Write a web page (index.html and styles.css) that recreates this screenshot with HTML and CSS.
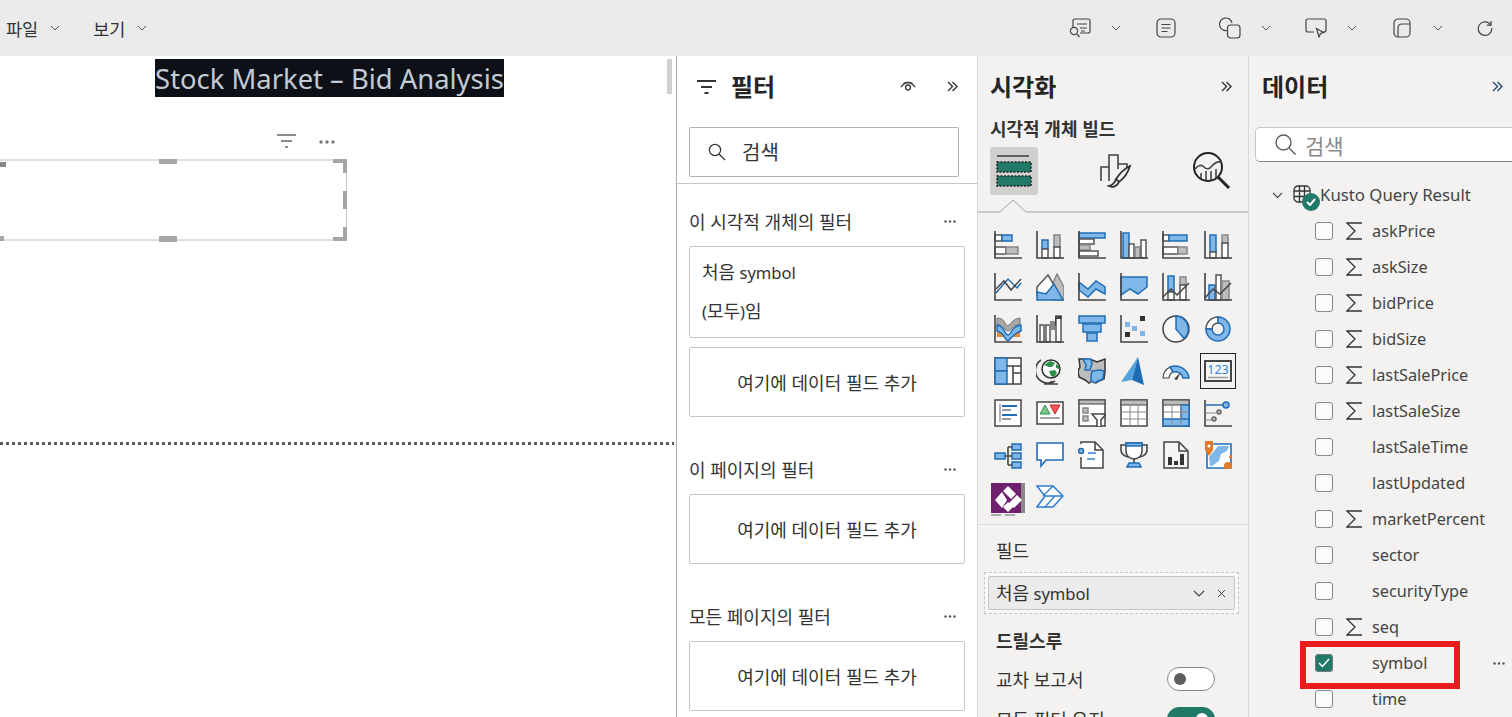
FILE: index.html
```html
<!DOCTYPE html>
<html lang="ko">
<head>
    <meta charset="UTF-8">
    <title>Power BI</title>
    <link rel="stylesheet" href="styles.css">
</head>
<body>
<div class="app">
    <header class="topbar">
        <nav class="menu">
            <span class="menu-item">파일 <svg class="chev" viewBox="0 0 10 6"><path d="M1 1l4 4 4-4"/></svg></span>
            <span class="menu-item">보기 <svg class="chev" viewBox="0 0 10 6"><path d="M1 1l4 4 4-4"/></svg></span>
        </nav>
        <div class="tools">
            <svg class="tool t1" viewBox="0 0 22 20"><path d="M4 9V3q0-2 2-2h13q2 0 2 2v10q0 2-2 2h-8"/><path d="M8 6h10M11 10h7M12 13h4"/><circle cx="5" cy="13" r="3.6"/><path d="M8 16l2.500 3"/></svg>
            <svg class="chev c1" viewBox="0 0 10 6"><path d="M1 1l4 4 4-4"/></svg>
            <svg class="tool t2" viewBox="0 0 20 20"><rect x="1" y="1" width="18" height="18" rx="4"/><path d="M5.500 6.500h9M5.500 10h9M5.500 13.500h6"/></svg>
            <svg class="tool t3" viewBox="0 0 22 22"><path d="M8 13.500a6.300 6.300 0 1 1 5-7.500"/><rect x="8.500" y="8" width="12.500" height="13" rx="3"/></svg>
            <svg class="chev c2" viewBox="0 0 10 6"><path d="M1 1l4 4 4-4"/></svg>
            <svg class="tool t4" viewBox="0 0 22 20"><path d="M9 14H3q-2 0-2-2V3q0-2 2-2h16q2 0 2 2v9q0 2-2 2h-2"/><path d="M11.500 10.500l7 4-3 1-1.500 3.500z"/></svg>
            <svg class="chev c3" viewBox="0 0 10 6"><path d="M1 1l4 4 4-4"/></svg>
            <svg class="tool t5" viewBox="0 0 18 20"><rect x="1" y="1" width="16" height="18" rx="4"/><path d="M5 19v-9q0-4 4-4h8"/></svg>
            <svg class="chev c4" viewBox="0 0 10 6"><path d="M1 1l4 4 4-4"/></svg>
            <svg class="tool t6" viewBox="0 0 16 16"><path d="M13.800 5A6.800 6.800 0 1 0 14.800 8"/><path d="M14 1v4.200H9.800"/></svg>
        </div>
    </header>

    <main class="main">
        <section class="canvas">
            <h1 class="report-title">Stock Market – Bid Analysis</h1>
            <div class="canvas-scroll"></div>
            <svg class="vis-filter" viewBox="0 0 19 14"><path d="M0 1h19M4 7h11M8 13h3"/></svg>
            <svg class="dots vis-more" viewBox="0 0 16 4"><circle cx="2" cy="2" r="1.700"/><circle cx="8" cy="2" r="1.700"/><circle cx="14" cy="2" r="1.700"/></svg>
            <div class="visual">
                <i class="grip g-tm"></i><i class="grip g-bm"></i><i class="grip g-rm"></i>
                <i class="grip g-lt"></i><i class="grip g-lb"></i>
                <i class="corner c-tr"></i><i class="corner c-br"></i>
            </div>
            <div class="page-break"></div>
        </section>

        <aside class="filters">
            <div class="pane-head">
                <svg class="head-filter" viewBox="0 0 19 14"><path d="M0 1h19M4 7h11M7.500 13h4"/></svg>
                <h2 class="pane-title">필터</h2>
                <svg class="eye" viewBox="0 0 16 11"><path d="M1 6q7-9 14 0"/><path d="M3.500 2.500q4.500-2 9 0" class="thin"/><circle cx="8" cy="6.500" r="2.400"/></svg>
                <svg class="dbl" viewBox="0 0 11 11"><path d="M1 1l4.500 4.500L1 10M5.500 1L10 5.500 5.500 10"/></svg>
            </div>
            <div class="filter-search">
                <svg class="glass" viewBox="0 0 18 18"><circle cx="7" cy="7" r="5.600"/><path d="M11 11l6 6"/></svg>
                <span>검색</span>
            </div>
            <div class="filter-body">
                <div class="filter-label"><span>이 시각적 개체의 필터</span><svg class="dots" viewBox="0 0 12 3"><circle cx="1.500" cy="1.500" r="1.200"/><circle cx="6" cy="1.500" r="1.200"/><circle cx="10.500" cy="1.500" r="1.200"/></svg></div>
                <div class="filter-card field-card">
                    <div><span class="ko">처음</span> symbol</div>
                    <div>(<span class="ko">모두</span>)<span class="ko">임</span></div>
                </div>
                <div class="filter-card drop">여기에 데이터 필드 추가</div>
                <div class="filter-label second"><span>이 페이지의 필터</span><svg class="dots" viewBox="0 0 12 3"><circle cx="1.500" cy="1.500" r="1.200"/><circle cx="6" cy="1.500" r="1.200"/><circle cx="10.500" cy="1.500" r="1.200"/></svg></div>
                <div class="filter-card drop">여기에 데이터 필드 추가</div>
                <div class="filter-label third"><span>모든 페이지의 필터</span><svg class="dots" viewBox="0 0 12 3"><circle cx="1.500" cy="1.500" r="1.200"/><circle cx="6" cy="1.500" r="1.200"/><circle cx="10.500" cy="1.500" r="1.200"/></svg></div>
                <div class="filter-card drop">여기에 데이터 필드 추가</div>
            </div>
        </aside>

        <aside class="viz">
            <div class="pane-head">
                <h2 class="pane-title">시각화</h2>
                <svg class="dbl" viewBox="0 0 11 11"><path d="M1 1l4.500 4.500L1 10M5.500 1L10 5.500 5.500 10"/></svg>
            </div>
            <div class="viz-sub">시각적 개체 빌드</div>
            <div class="viz-tabs">
                <div class="tab-on">
                    <svg viewBox="0 0 36 36" width="36" height="36">
                        <path d="M1 3h32" class="a"/>
                        <rect x="1" y="9" width="34" height="10" fill="#217a67" stroke="#222" stroke-width="1.500" stroke-dasharray="2 1.500"/>
                        <rect x="1" y="23" width="34" height="10" fill="#217a67" stroke="#222" stroke-width="1.500" stroke-dasharray="2 1.500"/>
                    </svg>
                </div>
                <svg class="tab-paint" viewBox="0 0 34 36">
                    <path d="M3 28V14h8M11 28V2h9v14M20 11h9v4" class="a"/>
                    <path d="M32 13Q24 17 18 26l3 3q8-6 11-16zM18 26q-2 6-7 7 6 3 10-4" fill="#f3f2f1" stroke="#333" stroke-width="1.800"/>
                </svg>
                <svg class="tab-search" viewBox="0 0 38 38">
                    <circle cx="15" cy="15" r="14" stroke="#222" fill="none" stroke-width="2"/>
                    <path d="M2 17q5-6 9-2t8-1 9-4M8 21v5M13 19v9M18 19v9M23 17v9" class="a"/>
                    <path d="M25 25l11 11" stroke="#222" stroke-width="3"/>
                </svg>
            </div>
            <svg class="tab-rule" viewBox="0 0 271 14"><path d="M0 13h22L35 1l13 12h223"/></svg>

            <div class="viz-grid">
                <!-- bar / column -->
                <svg viewBox="0 0 28 28"><rect x="1" y="4" width="7" height="6" class="w"/><rect x="8" y="4" width="10" height="6" class="b"/><rect x="1" y="16" width="11" height="7" class="w"/><rect x="12" y="16" width="12" height="7" class="g"/><path d="M1 0v27h27" class="a"/></svg>
                <svg viewBox="0 0 28 28"><rect x="6" y="9" width="6" height="9" class="b"/><rect x="6" y="18" width="6" height="9" class="w"/><rect x="18" y="4" width="6" height="12" class="g"/><rect x="18" y="16" width="6" height="11" class="w"/><path d="M1 0v27h27" class="a"/></svg>
                <svg viewBox="0 0 28 28"><rect x="1" y="2" width="26" height="5" class="b"/><rect x="1" y="8" width="15" height="5" class="w"/><rect x="1" y="14" width="11" height="5" class="g"/><rect x="1" y="20" width="19" height="5" class="w"/><path d="M1 0v27h27" class="a"/></svg>
                <svg viewBox="0 0 28 28"><rect x="3" y="2" width="6" height="25" class="b"/><rect x="9" y="13" width="5" height="14" class="w"/><rect x="15" y="16" width="5" height="11" class="g"/><rect x="21" y="9" width="5" height="18" class="w"/><path d="M1 0v27h27" class="a"/></svg>
                <svg viewBox="0 0 28 28"><rect x="1" y="4" width="6" height="6" class="w"/><rect x="7" y="4" width="18" height="6" class="b"/><rect x="1" y="16" width="15" height="7" class="w"/><rect x="16" y="16" width="9" height="7" class="g"/><path d="M1 0v27h27" class="a"/></svg>
                <svg viewBox="0 0 28 28"><rect x="6" y="4" width="6" height="17" class="b"/><rect x="6" y="21" width="6" height="6" class="w"/><rect x="18" y="4" width="6" height="8" class="g"/><rect x="18" y="12" width="6" height="15" class="w"/><path d="M1 0v27h27" class="a"/></svg>
                <!-- line / area -->
                <svg viewBox="0 0 28 28"><path d="M2 20L14 6l9 9 4-5" fill="none" stroke="#1f6db5" stroke-width="1.500"/><path d="M2 16l8-8 7 9 10-11" fill="none" stroke="#444" stroke-width="1.500"/><path d="M1 0v27h27" class="a"/></svg>
                <svg viewBox="0 0 28 28"><path d="M17 10L21 1l7 13v13H17z" class="g"/><path d="M1 14L12 2l6 10-8 9-9 1z" class="w"/><path d="M1 27v-8l9 2 8-10 9 16z" class="b"/></svg>
                <svg viewBox="0 0 28 28"><path d="M1 9l9 7 8-8 9 6v7l-9-5-8 8-9-7z" class="b"/><path d="M1 0v27h27" class="a"/></svg>
                <svg viewBox="0 0 28 28"><path d="M1 4h26v10l-9 7-8-5-9 6z" class="b"/><path d="M1 0v27h27" class="a"/></svg>
                <svg viewBox="0 0 28 28"><rect x="6" y="3" width="6" height="16" class="b"/><rect x="6" y="19" width="6" height="8" class="w"/><rect x="18" y="4" width="6" height="8" class="g"/><rect x="18" y="12" width="6" height="15" class="w"/><path d="M1 24l8-8 6 6 12-12" fill="none" stroke="#444" stroke-width="1.500"/><path d="M1 0v27h27" class="a"/></svg>
                <svg viewBox="0 0 28 28"><rect x="5" y="12" width="6" height="15" class="b"/><rect x="12" y="2" width="5" height="25" class="w"/><rect x="18" y="8" width="7" height="19" class="g"/><path d="M1 25l8-9 7 5 11-11" fill="none" stroke="#444" stroke-width="1.500"/><path d="M1 0v27h27" class="a"/></svg>
                <!-- ribbon, waterfall, funnel, scatter, pie, donut -->
                <svg viewBox="0 0 28 28"><path d="M3 3q6 0 8 5t6 0 9-5v6q-6 1-9 5t-6 0-8-5z" fill="#a8a8a8" stroke="#777"/><rect x="3" y="17" width="8" height="5" fill="#e58a34"/><rect x="18" y="17" width="8" height="5" fill="#e58a34"/><path d="M3 10q5 1 8 7t6 0 10-7v6q-6 2-10 7t-6 0-8-7z" class="b"/><path d="M1 0v27h27" class="a"/></svg>
                <svg viewBox="0 0 28 28"><rect x="4" y="10" width="4" height="17" class="w"/><rect x="10" y="10" width="4" height="17" class="w"/><rect x="14" y="6" width="5" height="9" fill="#888"/><rect x="20" y="1" width="5" height="26" class="w"/><path d="M19 1h7v3h-7zM19 1h1v10h-1z" fill="#444"/><path d="M1 0v27h27" class="a"/></svg>
                <svg viewBox="0 0 28 28"><rect x="1" y="1" width="26" height="7" class="b"/><rect x="5" y="9" width="18" height="8" class="b"/><rect x="9" y="18" width="10" height="8" class="b"/></svg>
                <svg viewBox="0 0 28 28"><rect x="5" y="7" width="5" height="5" fill="#7fb7e8"/><rect x="12" y="11" width="5" height="5" fill="#7fb7e8"/><rect x="20" y="1" width="5" height="5" fill="#333"/><rect x="5" y="17" width="5" height="5" fill="#333"/><rect x="20" y="16" width="5" height="5" fill="#7fb7e8"/><path d="M1 0v27h27" class="a"/></svg>
                <svg viewBox="0 0 28 28"><circle cx="14" cy="14" r="13" fill="#f8f8f8" stroke="#444" stroke-width="1.500"/><path d="M14 1a13 13 0 0 1 8 22.500L14 14z" class="b"/></svg>
                <svg viewBox="0 0 28 28"><path d="M2 14a12 12 0 0 1 12-12v6a6 6 0 0 0-6 6z" class="w"/><path d="M14 2a12 12 0 1 1-12 12h6a6 6 0 1 0 6-6z" class="b"/></svg>
                <!-- treemap, globe, map, azure, gauge, card -->
                <svg viewBox="0 0 28 28"><rect x="1" y="1" width="26" height="26" fill="#fff" stroke="#444" stroke-width="1.500"/><rect x="1" y="1" width="12" height="13" class="b"/><rect x="1" y="14" width="12" height="13" class="b"/><path d="M13 9h14M19 9v18M19 16h8" class="a"/></svg>
                <svg viewBox="0 0 28 28"><circle cx="15" cy="12" r="9" fill="#fff" stroke="#333" stroke-width="1.500"/><path d="M8 8l6-4 5 2-3 4-3 0zM13 14l6-1 2 3-3 4-3-1zM20 7l3 2v3l-3-1z" fill="#2f8f4a"/><path d="M5 3a12 12 0 0 0 14 21M15 24v3M8 27h14" class="a"/></svg>
                <svg viewBox="0 0 28 28"><path d="M1 2h6l7 1 5 2 8-3v13l-1 7-5 2-3 2-4-2-3 2-4-3-6-3-1-6 2-4z" fill="#bdbdbd" stroke="#333" stroke-width="1.500"/><path d="M5 2h8l1 5-2 6H7L8 8z" class="b"/><path d="M14 14l8-1 4 1-1 8-5 2-3 2-4-2v-5z" class="b"/></svg>
                <svg viewBox="0 0 28 28"><path d="M18 0L1 25l11-2z" fill="#55a3dc"/><path d="M18 0l-6 23 12 5z" fill="#1f6db5"/></svg>
                <svg viewBox="0 0 28 28"><path d="M1 21a13 13 0 0 1 7-11l3 5a7 7 0 0 0-4 6z" fill="#fff" stroke="#444" stroke-width="1.200"/><path d="M8 10a14 14 0 0 1 19 11h-6a8 8 0 0 0-10-6z" class="b"/><path d="M12 22l7-7-4 8z" fill="#444"/></svg>
                <div class="card-pick">
                    <svg viewBox="0 0 28 22" width="28" height="22"><rect x="1" y="1" width="26" height="20" fill="#f6f6f6" stroke="#444" stroke-width="2"/><text x="14" y="14" text-anchor="middle" class="num">123</text><path d="M4 17.500h20" stroke="#999" stroke-width="1.500"/></svg>
                </div>
                <!-- multirow, kpi, slicer, table, matrix, influencers -->
                <svg viewBox="0 0 28 28"><rect x="1" y="1" width="26" height="26" fill="#fff" stroke="#444" stroke-width="1.500"/><path d="M6 5v18" stroke="#999" stroke-width="1.500"/><path d="M8 7h15M8 16h15" stroke="#1f6db5" stroke-width="2.200"/><path d="M8 11h9M8 20h9" stroke="#777" stroke-width="1.500"/></svg>
                <svg viewBox="0 0 28 28"><rect x="1" y="3" width="26" height="22" fill="#fff" stroke="#444" stroke-width="1.500"/><path d="M4 15l5-9 5 9z" fill="#7cc48b" stroke="#2f8f4a"/><path d="M14 6h10l-5 9z" fill="#ec5a5a" stroke="#c22"/><path d="M4 19h20" stroke="#888" stroke-width="1.500"/></svg>
                <svg viewBox="0 0 28 28"><rect x="1" y="1" width="26" height="26" fill="#fff" stroke="#444" stroke-width="1.500"/><rect x="1" y="1" width="26" height="4" fill="#bbb" stroke="#444"/><rect x="5" y="9" width="5" height="5" class="g"/><rect x="5" y="17" width="5" height="5" class="g"/><path d="M14 15h14l-5 6v7h-4v-7z" fill="#fff" stroke="#444" stroke-width="1.500"/></svg>
                <svg viewBox="0 0 28 28"><rect x="1" y="1" width="26" height="26" fill="#fff" stroke="#444" stroke-width="1.500"/><rect x="1" y="1" width="26" height="5" fill="#bbb" stroke="#444"/><path d="M1 13h26M1 20h26M10 6v21M18 6v21" stroke="#888"/></svg>
                <svg viewBox="0 0 28 28"><rect x="1" y="1" width="26" height="26" fill="#fff" stroke="#444" stroke-width="1.500"/><rect x="1" y="1" width="26" height="5" fill="#bbb" stroke="#444"/><rect x="19" y="6" width="8" height="21" class="b"/><rect x="1" y="20" width="26" height="7" class="b"/><path d="M1 13h26M10 6v21M19 6v21" stroke="#888"/></svg>
                <svg viewBox="0 0 28 28"><path d="M1 1v26h27" class="a"/><path d="M1 14h11M1 21h8" stroke="#888" stroke-width="1.200"/><path d="M1 6h19" stroke="#1f6db5" stroke-width="1.500"/><circle cx="22" cy="6" r="3" class="b"/><circle cx="15" cy="13" r="2" class="g" style="stroke:#666"/><circle cx="10" cy="20" r="2" class="g" style="stroke:#666"/></svg>
                <!-- tree, bubble, doc, trophy, paginated, arcgis -->
                <svg viewBox="0 0 28 28"><rect x="1" y="12" width="10" height="6" class="b"/><rect x="18" y="3" width="9" height="6" class="b"/><rect x="18" y="12" width="9" height="6" class="b"/><rect x="18" y="21" width="9" height="6" class="b"/><path d="M11 15h7M14 6v18M14 6h4M14 24h4" class="a"/></svg>
                <svg viewBox="0 0 28 28"><path d="M1 2h26v17H10l-5 6v-6H1z" fill="#fff" stroke="#1f6db5" stroke-width="1.600"/></svg>
                <svg viewBox="0 0 28 28"><path d="M3 3V1h14l8 8v18H3V16" fill="#fff" stroke="#444" stroke-width="1.500"/><path d="M17 1v8h8" class="a"/><circle cx="3" cy="10" r="2.500" class="b"/><path d="M10 12h8M9 18h8" stroke="#2f86d0" stroke-width="1.500"/></svg>
                <svg viewBox="0 0 28 28"><path d="M6 4H1v5q0 5 7 7M22 4h5v5q0 5-7 7" class="a"/><path d="M6 2h16v8q0 7-8 8-8-1-8-8z" fill="#fff" stroke="#444" stroke-width="1.500"/><path d="M6 2h16v3H6z" class="b"/><path d="M14 18v4" class="a"/><path d="M9 22h10l2 4H7z" class="b"/></svg>
                <svg viewBox="0 0 28 28"><path d="M2 1h15l9 9v17H2z" fill="#f5f5f5" stroke="#444" stroke-width="1.500"/><path d="M17 1v9h9" class="a"/><path d="M6 16h4v8H6zM12 20h4v4h-4zM18 13h4v11h-4z" fill="#333"/></svg>
                <svg viewBox="0 0 28 28"><path d="M3 3h24v24H3z" fill="#fff" stroke="#1f6db5" stroke-width="1.600"/><path d="M14 5h11l-2 5-6 3-2 7-7 5h-2l-1-9z" class="b" style="stroke:none"/><path d="M1 0h8v9l-4 6-4-6z" fill="#e0792b"/><circle cx="5" cy="5" r="1.500" fill="#fff"/><circle cx="24" cy="25" r="4" fill="#e0792b"/><circle cx="27" cy="16" r="2" fill="#e0792b"/></svg>
                <!-- power apps, power automate -->
                <div class="purple">
                    <svg viewBox="0 0 34 34" width="34" height="34"><rect width="34" height="30" fill="#6e1f6e"/><rect x="30" width="4" height="30" fill="#888"/><path d="M17 3l8 8-5 5-8-8zM26 12l5 5-8 8-5-5zM11 9l5 8-5 8-7-8zM17 19l5 5-5 5-5-5z" fill="#fff"/><path d="M0 32h10M14 32h10" stroke="#666"/></svg>
                </div>
                <svg viewBox="0 0 28 28"><path d="M1 3h16l10 10-10 11H1l8-11z" fill="#fff" stroke="#2b7cd3" stroke-width="1.500"/><path d="M9 13h18M17 3L7 13M19 13L9 24" stroke="#2b7cd3" stroke-width="1.300"/></svg>
            </div>

            <div class="viz-fields">
                <div class="well-label">필드</div>
                <div class="well">
                    <div class="pill">
                        <span class="pill-text"><span class="ko">처음</span> symbol</span>
                        <svg class="pill-chev" viewBox="0 0 12 7"><path d="M1 1l5 5 5-5"/></svg>
                        <svg class="pill-x" viewBox="0 0 9 9"><path d="M1 1l7 7M8 1L1 8"/></svg>
                    </div>
                </div>
                <div class="well-head">드릴스루</div>
                <div class="toggle-row">
                    <span>교차 보고서</span>
                    <span class="toggle"><i></i></span>
                </div>
                <div class="toggle-row">
                    <span>모든 필터 유지</span>
                    <span class="toggle on"><i></i></span>
                </div>
            </div>
        </aside>

        <aside class="data">
            <div class="pane-head">
                <h2 class="pane-title">데이터</h2>
                <svg class="dbl" viewBox="0 0 11 11"><path d="M1 1l4.500 4.500L1 10M5.500 1L10 5.500 5.500 10"/></svg>
            </div>
            <div class="data-search">
                <svg viewBox="0 0 21 21"><circle cx="8.500" cy="8.500" r="7.500"/><path d="M14 14l6.500 6.500"/></svg>
                <span>검색</span>
            </div>
            <div class="tree-root">
                <svg class="tree-chev" viewBox="0 0 11 7"><path d="M1 1l4.500 4.500L10 1"/></svg>
                <span class="table-ico">
                    <svg viewBox="0 0 18 18" width="18" height="18"><rect x="1" y="1" width="16" height="16" rx="4"/><path d="M1 6h16M1 11.500h16M6.500 1v16M11.500 1v16"/></svg>
                    <i class="badge"><svg viewBox="0 0 10 8" width="10" height="8"><path d="M1 4l3 3 5-6"/></svg></i>
                </span>
                <span class="root-name">Kusto Query Result</span>
            </div>
            <ul class="fields">
                <li><i class="check"></i><svg class="sigma" viewBox="0 0 17 18"><path d="M16 1H1l8 8-8 8h15"/></svg><span>askPrice</span></li>
                <li><i class="check"></i><svg class="sigma" viewBox="0 0 17 18"><path d="M16 1H1l8 8-8 8h15"/></svg><span>askSize</span></li>
                <li><i class="check"></i><svg class="sigma" viewBox="0 0 17 18"><path d="M16 1H1l8 8-8 8h15"/></svg><span>bidPrice</span></li>
                <li><i class="check"></i><svg class="sigma" viewBox="0 0 17 18"><path d="M16 1H1l8 8-8 8h15"/></svg><span>bidSize</span></li>
                <li><i class="check"></i><svg class="sigma" viewBox="0 0 17 18"><path d="M16 1H1l8 8-8 8h15"/></svg><span>lastSalePrice</span></li>
                <li><i class="check"></i><svg class="sigma" viewBox="0 0 17 18"><path d="M16 1H1l8 8-8 8h15"/></svg><span>lastSaleSize</span></li>
                <li><i class="check"></i><em class="nosigma"></em><span>lastSaleTime</span></li>
                <li><i class="check"></i><em class="nosigma"></em><span>lastUpdated</span></li>
                <li><i class="check"></i><svg class="sigma" viewBox="0 0 17 18"><path d="M16 1H1l8 8-8 8h15"/></svg><span>marketPercent</span></li>
                <li><i class="check"></i><em class="nosigma"></em><span>sector</span></li>
                <li><i class="check"></i><em class="nosigma"></em><span>securityType</span></li>
                <li><i class="check"></i><svg class="sigma" viewBox="0 0 17 18"><path d="M16 1H1l8 8-8 8h15"/></svg><span>seq</span></li>
                <li class="picked"><i class="check on"><svg viewBox="0 0 12 10" width="12" height="10"><path d="M1 5l3.500 3.500L11 1"/></svg></i><em class="nosigma"></em><span>symbol</span><svg class="dots row-more" viewBox="0 0 12 3"><circle cx="1.500" cy="1.500" r="1.200"/><circle cx="6" cy="1.500" r="1.200"/><circle cx="10.500" cy="1.500" r="1.200"/></svg></li>
                <li><i class="check"></i><em class="nosigma"></em><span>time</span></li>
            </ul>
        </aside>
    </main>
</div>
</body>
</html>
```

FILE: styles.css
```css
*,*::after{
    margin: 0;
    padding: 0;
    box-sizing: border-box;
    list-style: none;
}
html,body{
    height: 100%;
    overflow: hidden;
}
body{
    font-family: "Noto Sans", "Noto Sans CJK KR", sans-serif;
    color: #252423;
    background: #fff;
}
svg{
    display: block;
    flex: none;
}
i,em,b{
    font-style: normal;
    font-weight: normal;
}
.ko{
    font-size: 18px;
}
.app{
    display: flex;
    flex-direction: column;
    height: 717px;
}

/* top bar */
.topbar{
    height: 56px;
    background: #ebebeb;
    display: flex;
    align-items: center;
    justify-content: space-between;
    flex: none;
}
.menu{
    display: flex;
    padding-left: 6px;
    gap: 33px;
    font-size: 17.500px;
    color: #333;
}
.menu-item{
    display: flex;
    align-items: center;
    gap: 12px;
}
.chev{
    width: 10px;
    height: 6px;
    fill: none;
    stroke: #555;
    stroke-width: 1;
}
.tools{
    display: flex;
    align-items: center;
    padding-right: 19px;
}
.tool{
    fill: none;
    stroke: #444;
    stroke-width: 1.2;
}
.t1{ width: 22px; height: 20px; }
.c1{ margin-left: 20px; }
.t2{ width: 20px; height: 20px; margin-left: 35px; }
.t3{ width: 22px; height: 22px; margin-left: 43px; }
.c2{ margin-left: 20px; }
.t4{ width: 22px; height: 20px; margin-left: 34px; }
.c3{ margin-left: 20px; }
.t5{ width: 18px; height: 20px; margin-left: 36px; }
.c4{ margin-left: 22px; }
.t6{ width: 16px; height: 16px; margin-left: 34px; }

.main{
    flex: 1;
    display: flex;
    min-height: 0;
}

/* report canvas */
.canvas{
    width: 676px;
    flex: none;
    position: relative;
    background: #fff;
    overflow: hidden;
}
.report-title{
    position: absolute;
    left: 155px;
    top: 3px;
    width: 349px;
    height: 38px;
    background: #0d1117;
    color: #c3cad3;
    font-size: 27.400px;
    font-weight: 400;
    line-height: 40px;
    white-space: nowrap;
    text-align: center;
}
.canvas-scroll{
    position: absolute;
    left: 667px;
    top: 3px;
    width: 5px;
    height: 35px;
    background: #cfcfcf;
}
.vis-filter{
    position: absolute;
    left: 277px;
    top: 78px;
    width: 19px;
    height: 14px;
    fill: none;
    stroke: #666;
    stroke-width: 1.3;
}
.dots{
    width: 12px;
    height: 3px;
    fill: #555;
}
.vis-more{
    position: absolute;
    left: 319px;
    top: 84px;
    width: 16px;
    height: 4px;
    fill: #777;
}
.visual{
    position: absolute;
    left: -3px;
    top: 103px;
    width: 350px;
    height: 82px;
    border: 1px solid #c4c4c4;
    border-top: 2px solid #e0e0e0;
    border-bottom: 2px solid #e0e0e0;
}
.grip{
    position: absolute;
    background: #a6a6a6;
}
.g-tm{ left: 161px; top: -2px; width: 18px; height: 5px; }
.g-bm{ left: 161px; bottom: -3px; width: 18px; height: 6px; }
.g-rm{ right: -1px; top: 30px; width: 4px; height: 18px; }
.g-lt{ left: 0; top: 1px; width: 8px; height: 5px; background: #888; }
.g-lb{ left: 0; bottom: -2px; width: 6px; height: 5px; }
.corner{
    position: absolute;
    right: -1px;
    width: 14px;
    height: 14px;
    border-right: 4px solid #a6a6a6;
}
.c-tr{ top: -2px; border-top: 4px solid #a6a6a6; }
.c-br{ bottom: -2px; border-bottom: 4px solid #a6a6a6; }
.page-break{
    position: absolute;
    left: 0;
    top: 386px;
    width: 674px;
    height: 3px;
    background: repeating-linear-gradient(90deg, #5a5a5a 0 3px, transparent 3px 6px);
}

/* pane headers */
.pane-head{
    height: 62px;
    display: flex;
    align-items: center;
    flex: none;
}
.pane-title{
    font-size: 24px;
    font-weight: 700;
    line-height: 28px;
    color: #252423;
    margin-top: -1px;
}
.dbl{
    width: 11px;
    height: 11px;
    fill: none;
    stroke: #333;
    stroke-width: 1.4;
    margin-left: auto;
    margin-top: -2px;
}

/* filter pane */
.filters{
    width: 302px;
    flex: none;
    background: #fff;
    border-left: 1px solid #b3b0ad;
    border-right: 1px solid #d6d6d6;
    overflow: hidden;
}
.filters .pane-head{
    padding: 0 19px 0 20px;
}
.head-filter{
    width: 19px;
    height: 14px;
    fill: none;
    stroke: #333;
    stroke-width: 1.800;
    margin-right: 15px;
}
.eye{
    width: 16px;
    height: 11px;
    fill: none;
    stroke: #444;
    stroke-width: 1.500;
    margin-left: auto;
    margin-top: -2px;
}
.filters .dbl{
    margin-left: 31px;
}
.filter-search{
    margin: 9px 18px 0 12px;
    height: 50px;
    border: 1px solid #b3b0ad;
    border-radius: 2px;
    display: flex;
    align-items: center;
    padding-left: 18px;
    gap: 16px;
    font-size: 20px;
    color: #333;
}
.filter-search span{
    margin-top: -1px;
}
.glass{
    width: 18px;
    height: 18px;
    fill: none;
    stroke: #333;
    stroke-width: 1.300;
}
.filter-body{
    margin-top: 6px;
    padding: 0 12px 0 12px;
    border-top: 1px solid #c8c6c4;
}
.filter-label{
    display: flex;
    justify-content: space-between;
    align-items: center;
    height: 22px;
    margin-top: 26px;
    margin-bottom: 14px;
    padding-right: 9px;
    font-size: 18px;
    color: #333;
}
.filter-label.second{
    margin-top: 41px;
}
.filter-label.third{
    margin-top: 41px;
}
.filter-card{
    border: 1px solid #c8c6c4;
    border-radius: 2px;
    font-size: 18px;
    color: #333;
}
.field-card{
    height: 92px;
    padding: 6px 12px;
    font-size: 16.600px;
    line-height: 38px;
    margin-bottom: 9px;
}
.drop{
    height: 70px;
    display: flex;
    align-items: center;
    justify-content: center;
    padding-left: 0;
}

/* visualizations pane */
.viz{
    width: 271px;
    flex: none;
    background: #f3f2f1;
    border-right: 1px solid #d9d9d9;
    overflow: hidden;
}
.viz .pane-head{
    padding: 0 16px 0 12px;
}
.viz-sub{
    padding-left: 12px;
    font-size: 18px;
    font-weight: 700;
    line-height: 22px;
    color: #333;
}
.viz-tabs{
    display: flex;
    align-items: center;
    padding-left: 12px;
    margin-top: 7px;
}
.tab-on{
    width: 48px;
    height: 48px;
    background: #d2d0ce;
    border-radius: 3px;
    display: flex;
    align-items: center;
    justify-content: center;
}
.tab-paint{
    width: 34px;
    height: 36px;
    margin-left: 60px;
}
.tab-search{
    width: 38px;
    height: 38px;
    margin-left: 61px;
}
.tab-rule{
    width: 271px;
    height: 14px;
    margin-top: 4px;
    fill: none;
    stroke: #a19f9d;
    stroke-width: 1;
}
.a{
    fill: none;
    stroke: #444;
    stroke-width: 1.600;
}
.w{
    fill: #fff;
    stroke: #555;
    stroke-width: 1.500;
}
.b{
    fill: #7fb7e8;
    stroke: #1f6db5;
    stroke-width: 1.500;
}
.g{
    fill: #bdbdbd;
    stroke: #888;
    stroke-width: 1.500;
}
.viz-grid{
    display: grid;
    grid-template-columns: repeat(6, 28px);
    grid-auto-rows: 28px;
    gap: 14px;
    padding: 18px 0 0 16px;
}
.viz-grid > svg{
    width: 28px;
    height: 28px;
}
.card-pick{
    width: 36px;
    height: 36px;
    margin: -4px;
    border: 1px solid #222;
    display: flex;
    align-items: center;
    justify-content: center;
}
.num{
    font-family: "Noto Sans", sans-serif;
    font-size: 12.500px;
    fill: #2f86d0;
}
.purple{
    width: 34px;
    height: 34px;
    margin: 0 0 0 -3px;
}
.viz-fields{
    margin-top: 13px;
    border-top: 1px solid #e1dfdd;
}
.well-label{
    padding-left: 18px;
    font-size: 18px;
    line-height: 22px;
    margin-top: 15px;
    color: #333;
}
.well{
    margin: 10px 9px 0 6px;
    height: 42px;
    padding: 3px;
    border: 1px dashed #c8c6c4;
    background: #f8f8f7;
}
.pill{
    height: 34px;
    background: #ebebeb;
    border: 1px solid #c8c6c4;
    border-radius: 2px;
    display: flex;
    align-items: center;
    padding: 0 8px 0 7px;
    font-size: 16.600px;
    color: #333;
}
.pill-text{
    flex: 1;
    margin-top: -3px;
}
.pill-chev{
    width: 12px;
    height: 7px;
    fill: none;
    stroke: #444;
    stroke-width: 1.200;
}
.pill-x{
    width: 9px;
    height: 9px;
    fill: none;
    stroke: #444;
    margin-left: 12px;
}
.well-head{
    padding-left: 18px;
    font-size: 18px;
    font-weight: 700;
    line-height: 22px;
    margin-top: 16px;
    color: #333;
}
.toggle-row{
    display: flex;
    align-items: center;
    justify-content: space-between;
    height: 24px;
    padding: 0 33px 0 18px;
    margin-top: 15px;
    font-size: 18px;
    color: #333;
}
.toggle-row + .toggle-row{
    margin-top: 16px;
}
.toggle{
    width: 48px;
    height: 24px;
    border: 1px solid #8a8886;
    border-radius: 12px;
    background: #fff;
    display: flex;
    align-items: center;
    padding-left: 6px;
}
.toggle i{
    width: 12px;
    height: 12px;
    border-radius: 50%;
    background: #605e5c;
}
.toggle.on{
    background: #217a67;
    border-color: #217a67;
    justify-content: flex-end;
    padding: 0 6px 0 0;
}
.toggle.on i{
    background: #fff;
}

/* data pane */
.data{
    flex: 1;
    background: #f3f2f1;
    overflow: hidden;
}
.data .pane-head{
    padding: 0 9px 0 13px;
}
.data .dbl{
    stroke: #24486e;
}
.data-search{
    margin: 9px -6px 0 6px;
    height: 35px;
    background: #fff;
    border: 1px solid #c8c6c4;
    border-bottom-color: #8a8886;
    border-radius: 5px;
    display: flex;
    align-items: center;
    padding-left: 19px;
    gap: 9px;
    font-size: 21px;
    color: #8a8886;
}
.data-search svg{
    width: 21px;
    height: 21px;
    fill: none;
    stroke: #605e5c;
    stroke-width: 1.400;
}
.tree-root{
    display: flex;
    align-items: center;
    height: 36px;
    margin-top: 15px;
    padding-left: 23px;
    font-size: 16.800px;
    color: #444;
}
.tree-chev{
    width: 11px;
    height: 7px;
    fill: none;
    stroke: #444;
    stroke-width: 1.100;
}
.table-ico{
    position: relative;
    width: 18px;
    height: 18px;
    margin-left: 10px;
    margin-top: -2px;
}
.table-ico > svg{
    fill: none;
    stroke: #333;
    stroke-width: 1.300;
}
.badge{
    position: absolute;
    left: 9px;
    top: 8px;
    width: 18px;
    height: 18px;
    border-radius: 50%;
    background: #217a67;
    display: flex;
    align-items: center;
    justify-content: center;
}
.badge svg{
    fill: none;
    stroke: #fff;
    stroke-width: 2;
}
.root-name{
    margin-left: 9px;
    margin-top: -1px;
}
.fields li{
    display: flex;
    align-items: center;
    height: 36px;
    padding-left: 66px;
    font-size: 16.300px;
    color: #444;
    position: relative;
}
.check{
    width: 18px;
    height: 18px;
    border: 1px solid #8a8886;
    border-radius: 3px;
    background: #fbfbfb;
    flex: none;
    display: flex;
    align-items: center;
    justify-content: center;
}
.check.on{
    background: #217a67;
    border-color: #777;
}
.check svg{
    fill: none;
    stroke: #fff;
    stroke-width: 1.500;
}
.sigma{
    width: 17px;
    height: 18px;
    margin: 0 9px 0 13px;
    fill: none;
    stroke: #333;
    stroke-width: 1.300;
}
.nosigma{
    width: 39px;
    flex: none;
}
.picked::after{
    content: "";
    position: absolute;
    left: 51px;
    top: -4px;
    width: 160px;
    height: 48px;
    border: 6px solid #e81c1c;
}
.row-more{
    position: absolute;
    left: 244px;
    top: 17px;
}
```
